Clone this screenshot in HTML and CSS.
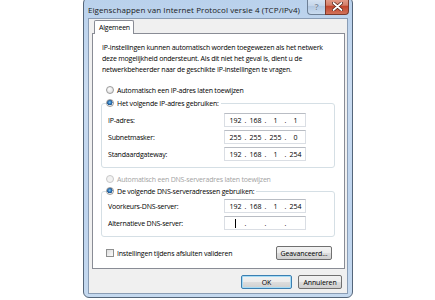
FILE: index.html
```html
<!DOCTYPE html>
<html lang="nl">
<head>
  <meta charset="UTF-8" />
  <title>Eigenschappen van Internet Protocol versie 4 (TCP/IPv4)</title>
  <link rel="stylesheet" href="styles.css">
</head>
<body>

  <div class="window">
    <div class="titlebar">
      <span class="title">Eigenschappen van Internet Protocol versie 4 (TCP/IPv4)</span>
      <div class="caption-buttons">
        <span class="cap-btn help">?</span>
        <span class="cap-btn close">
          <svg width="11" height="9" viewBox="0 0 11 9">
            <path d="M1.5 1 L9.5 8 M9.5 1 L1.5 8" stroke="#4a1a10" stroke-width="3.2" stroke-linecap="round"/>
            <path d="M1.5 1 L9.5 8 M9.5 1 L1.5 8" stroke="#fff" stroke-width="1.8" stroke-linecap="round"/>
          </svg>
        </span>
      </div>
    </div>

    <div class="client">
      <div class="tabs"><span class="tab">Algemeen</span></div>

      <div class="panel">
        <p class="intro">IP-instellingen kunnen automatisch worden toegewezen als het netwerk<br>deze mogelijkheid ondersteunt. Als dit niet het geval is, dient u de<br>netwerkbeheerder naar de geschikte IP-instellingen te vragen.</p>

        <div class="option"><span class="radio"></span>Automatisch een IP-adres laten toewijzen</div>

        <fieldset class="group">
          <legend class="option"><span class="radio checked"></span>Het volgende IP-adres gebruiken:</legend>
          <div class="field">
            <span>IP-adres:</span>
            <div class="ip"><span>192</span><i>.</i><span>168</span><i>.</i><span>1</span><i>.</i><span>1</span></div>
          </div>
          <div class="field">
            <span>Subnetmasker:</span>
            <div class="ip"><span>255</span><i>.</i><span>255</span><i>.</i><span>255</span><i>.</i><span>0</span></div>
          </div>
          <div class="field">
            <span>Standaardgateway:</span>
            <div class="ip"><span>192</span><i>.</i><span>168</span><i>.</i><span>1</span><i>.</i><span>254</span></div>
          </div>
        </fieldset>

        <div class="option disabled"><span class="radio"></span>Automatisch een DNS-serveradres laten toewijzen</div>

        <fieldset class="group dns">
          <legend class="option"><span class="radio checked"></span>De volgende DNS-serveradressen gebruiken:</legend>
          <div class="field">
            <span>Voorkeurs-DNS-server:</span>
            <div class="ip"><span>192</span><i>.</i><span>168</span><i>.</i><span>1</span><i>.</i><span>254</span></div>
          </div>
          <div class="field">
            <span>Alternatieve DNS-server:</span>
            <div class="ip"><span><b class="caret"></b></span><i>.</i><span></span><i>.</i><span></span><i>.</i><span></span></div>
          </div>
        </fieldset>

        <div class="bottom-row">
          <div class="option"><span class="checkbox"></span>Instellingen tijdens afsluiten valideren</div>
          <button class="btn advanced">Geavanceerd...</button>
        </div>
      </div>

      <div class="footer">
        <button class="btn default">OK</button>
        <button class="btn">Annuleren</button>
      </div>
    </div>
  </div>

</body>
</html>
```

FILE: styles.css
```css
* {
  box-sizing: border-box;
}
body {
  margin: 0;
  background: #fff;
  font-family: 'Open Sans', 'Noto Sans', sans-serif;
  font-size: 7px;
  letter-spacing: -0.2px;
  color: #000;
}
.window {
  width: 270px;
  height: 301px;
  margin: -3px 0 0 83px;
  padding: 0 4px 3px 4px;
  border: 1px solid #55667a;
  border-radius: 6px;
  background: linear-gradient(#b9d1ec, #cadcf1 30%, #bed4ee 70%, #c5d9ef);
  display: flex;
  flex-direction: column;
}
.titlebar {
  height: 20px;
  display: flex;
  align-items: flex-start;
}
.title {
  padding: 6px 0 0 0;
  font-size: 8px;
  letter-spacing: 0.08px;
  color: #1a1a1a;
  white-space: nowrap;
}
.caption-buttons {
  margin-left: auto;
  margin-right: -1px;
  display: flex;
}
.cap-btn {
  height: 17px;
  display: flex;
  align-items: center;
  justify-content: center;
  border: 1px solid #6d7f95;
  border-top: none;
}
.help {
  width: 18px;
  border-right: none;
  border-radius: 0 0 0 4px;
  background: linear-gradient(#dbe7f5, #c3d5ea 50%, #b2c8e2 51%, #c9dbef);
  color: #7d8ea3;
  font-size: 9px;
  font-weight: bold;
  text-shadow: 0 0 1px #fff;
}
.close {
  width: 24px;
  border-radius: 0 0 4px 0;
  border-color: #7b3a2c;
  background: linear-gradient(#e8a493, #d47f69 45%, #c2452c 52%, #d1725a);
}

.client {
  flex: 1;
  display: flex;
  flex-direction: column;
  padding: 1px 2px 0 3px;
  background: #f0f0f0;
  border: 1px solid #8a9db5;
}
.tabs {
  height: 13px;
  display: flex;
}
.tab {
  position: relative;
  z-index: 1;
  margin-left: 2px;
  width: 40px;
  height: 14px;
  padding: 2px 0 0 4px;
  background: #fff;
  border: 1px solid #898c95;
  border-bottom: none;
  border-radius: 2px 2px 0 0;
}
.panel {
  height: 236px;
  padding: 8px 0 0 9px;
  background: #fff;
  border: 1px solid #898c95;
}
.intro {
  margin: 0;
  line-height: 11px;
  white-space: nowrap;
}
.option {
  display: flex;
  align-items: center;
  height: 12px;
  white-space: nowrap;
}
.panel > .option {
  margin: 9px 0 0 4px;
}
.disabled {
  color: #a3a3a3;
}
.radio {
  width: 8px;
  height: 8px;
  margin-right: 3px;
  border-radius: 50%;
  border: 1px solid #9b9b9b;
  background: radial-gradient(circle at 40% 35%, #fff, #e2e2e2 70%, #d0d0d0);
}
.disabled .radio {
  border-color: #c8c8c8;
  background: #f2f2f2;
}
.radio.checked {
  background: radial-gradient(circle at 45% 40%, #7fc7f0 0, #2a73b8 35%, #1c4f86 55%, #f4f4f4 62%, #dcdcdc);
}
.checkbox {
  width: 8px;
  height: 8px;
  margin-right: 3px;
  border: 1px solid #8e8f8f;
  background: linear-gradient(135deg, #dcdcdc, #fcfcfc);
}

.group {
  margin: 1px 9px 0 -1px;
  padding: 0 0 6px 6px;
  border: 1px solid #d5dfe5;
  border-radius: 3px;
}
.group legend {
  margin-left: -2px;
  padding: 0 2px 0 0;
}
.field {
  display: grid;
  grid-template-columns: 116px 82px;
  align-items: center;
  margin-top: 3px;
}
.field:first-of-type {
  margin-top: 4px;
}
.panel > .option.disabled {
  margin-top: 5px;
}
.dns {
  margin-top: 0;
  padding-bottom: 6px;
}
.dns .field:first-of-type {
  margin-top: 2px;
}
.ip {
  height: 14px;
  display: flex;
  align-items: center;
  padding-left: 2px;
  border: 1px solid #dadee4;
  border-top-color: #b9bdc4;
  background: #fff;
  letter-spacing: 0;
}
.ip span {
  width: 17px;
  text-align: center;
}
.ip i {
  width: 3px;
  font-style: normal;
  text-align: center;
}
.caret {
  display: inline-block;
  width: 1px;
  height: 9px;
  background: #000;
  vertical-align: middle;
}

.bottom-row {
  display: flex;
  align-items: center;
  justify-content: space-between;
  margin: 9px 12px 0 4px;
}
.bottom-row .option {
  margin: 0;
}
.btn {
  height: 14px;
  padding: 0;
  font-family: inherit;
  font-size: 7px;
  letter-spacing: -0.1px;
  color: #000;
  border: 1px solid #707070;
  border-radius: 2px;
  background: linear-gradient(#f2f2f2, #ebebeb 50%, #dddddd 51%, #cfcfcf);
}
.advanced {
  width: 56px;
}
.footer {
  display: flex;
  justify-content: flex-end;
  gap: 6px;
  margin-top: 6px;
  padding-right: 3px;
}
.footer .btn {
  width: 44px;
}
.footer .default {
  width: 51px;
  border-color: #3c7fb1;
  box-shadow: inset 0 0 0 1px #a6dcf6;
}
```
